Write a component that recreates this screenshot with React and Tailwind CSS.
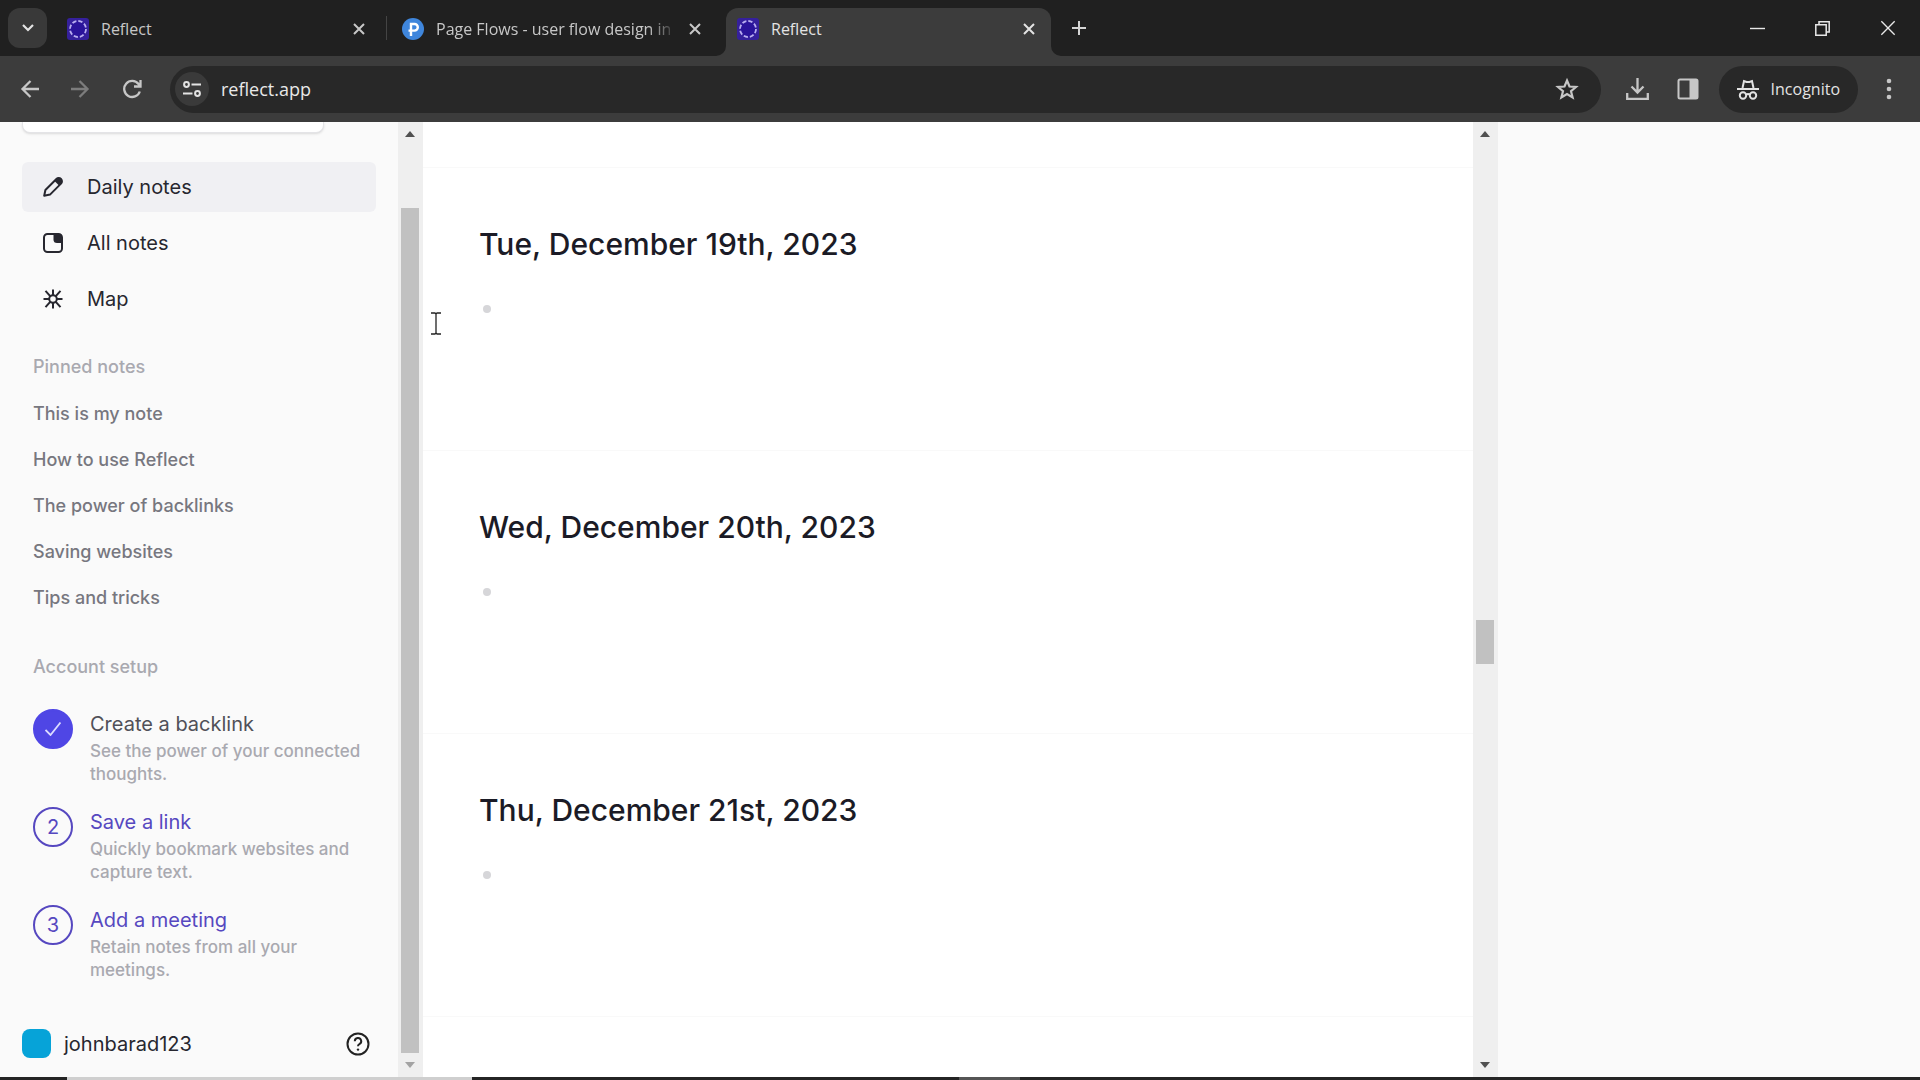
import React from 'react';

const navItems = [
    { label: 'Daily notes', icon: PencilIcon, active: true },
    { label: 'All notes', icon: NoteIcon },
    { label: 'Map', icon: MapIcon },
];

const pinnedNotes = [
    'This is my note',
    'How to use Reflect',
    'The power of backlinks',
    'Saving websites',
    'Tips and tricks',
];

const setupSteps = [
    { title: 'Create a backlink', text: 'See the power of your connected thoughts.', done: true },
    { title: 'Save a link', text: 'Quickly bookmark websites and capture text.' },
    { title: 'Add a meeting', text: 'Retain notes from all your meetings.' },
];

const days = ['Tue, December 19th, 2023', 'Wed, December 20th, 2023', 'Thu, December 21st, 2023'];

function PencilIcon() {
    return (
        <svg viewBox="0 0 20 20" className="w-5 h-5" fill="none" stroke="currentColor" strokeWidth="2" strokeLinejoin="round">
            <path d="M1.2 18.8 2.4 13 13.4 2a3 3 0 0 1 4.6 4.600L7 17.600Z" />
            <path d="M11.500 4 14 1.500c2.500-1.500 6 2 4.500 4.500L16 8.500Z" fill="currentColor" stroke="none" />
        </svg>
    );
}

function NoteIcon() {
    return (
        <svg viewBox="0 0 20 20" className="w-5 h-5" fill="none" stroke="currentColor" strokeWidth="2">
            <rect x="1" y="1" width="18" height="18" rx="3.500" />
            <path d="M10.500 1H16a3 3 0 0 1 3 3v6h-5a3.500 3.500 0 0 1-3.500-3.500Z" fill="currentColor" stroke="none" />
        </svg>
    );
}

function MapIcon() {
    return (
        <svg viewBox="0 0 20 20" className="w-5 h-5" fill="none" stroke="currentColor" strokeWidth="2">
            <circle cx="10" cy="10" r="3.800" />
            <path d="M10 6V.5M10 14v5.500M6 10H.5M14 10h5.500M7.200 7.200 2.500 1.800M12.800 7.200l4.700-5.400M7.200 12.800l-4.700 5.400M12.800 12.800l4.700 5.400" />
        </svg>
    );
}

function ReflectLogo() {
    return (
        <svg viewBox="0 0 22 22" className="w-[22px] h-[22px] shrink-0">
            <rect width="22" height="22" rx="3" fill="#35209c" />
            <circle cx="11" cy="11" r="8" fill="#2a139b" stroke="#b9aef0" strokeWidth="1.800" strokeDasharray="4.300 2" />
        </svg>
    );
}

function PageFlowsLogo() {
    return (
        <svg viewBox="0 0 22 22" className="w-[22px] h-[22px] shrink-0">
            <circle cx="11" cy="11" r="11" fill="#3f86dc" />
            <path d="M9 18V6h3.500a3.300 3.300 0 0 1 0 6.600H6.500" fill="none" stroke="#fff" strokeWidth="2.400" />
        </svg>
    );
}

function Cross({ className }) {
    return (
        <svg viewBox="0 0 12 12" className={className} fill="none" stroke="currentColor">
            <path d="m1 1 10 10M11 1 1 11" />
        </svg>
    );
}

function Tab({ title, logo, active, fade, className }) {
    return (
        <div className={`flex items-center h-full pl-[11px] pr-4 pb-[6px] gap-3 ${active ? 'bg-[#3c3c3c] rounded-t-xl text-[#e3e3e3] relative' : 'text-[#c7c7c7]'} ${className}`}>
            {active && (
                <>
                    <svg viewBox="0 0 10 10" className="absolute right-full bottom-0 w-[10px] h-[10px]"><path d="M10 0v10H0A10 10 0 0 0 10 0Z" fill="#3c3c3c" /></svg>
                    <svg viewBox="0 0 10 10" className="absolute left-full bottom-0 w-[10px] h-[10px]"><path d="M0 0v10h10A10 10 0 0 1 0 0Z" fill="#3c3c3c" /></svg>
                </>
            )}
            {logo}
            <span className={`flex-1 min-w-0 whitespace-nowrap text-[16px] leading-6 ${fade ? '[mask-image:linear-gradient(to_right,#000_88%,transparent)]' : ''}`}>{title}</span>
            <button aria-label={`Close ${title}`}><Cross className="w-3 h-3 stroke-2" /></button>
        </div>
    );
}

function TabStrip() {
    return (
        <div className="flex h-14 bg-[#202020] pt-2 pl-2">
            <button aria-label="Search tabs" className="w-[39px] h-10 rounded-xl bg-[#393939] text-[#e3e3e3] flex items-center justify-center">
                <svg viewBox="0 0 12 8" className="w-3 h-2" fill="none" stroke="currentColor" strokeWidth="2.200"><path d="m1 1 5 5 5-5" /></svg>
            </button>
            <div className="flex flex-1 min-w-0 h-12">
                <Tab title="Reflect" logo={<ReflectLogo />} className="w-[325px] ml-[9px]" />
                <div className="w-px h-6 mt-2 ml-[5px] bg-[#444]" />
                <Tab title="Page Flows - user flow design in" logo={<PageFlowsLogo />} fade className="w-[326px] ml-1" />
                <Tab title="Reflect" logo={<ReflectLogo />} active className="w-[325px] ml-[9px]" />
                <button aria-label="New tab" className="ml-5 h-10 text-[#d5d5d5]">
                    <svg viewBox="0 0 16 16" className="w-4 h-4" fill="none" stroke="currentColor" strokeWidth="2"><path d="M8 1v14M1 8h14" /></svg>
                </button>
            </div>
            <div className="flex h-10 text-[#e8e8e8]">
                <button aria-label="Minimize" className="w-[65px] flex items-center justify-center">
                    <svg viewBox="0 0 15 15" className="w-[15px] h-[15px]" fill="none" stroke="currentColor" strokeWidth="1.400"><path d="M0 7.500h15" /></svg>
                </button>
                <button aria-label="Restore" className="w-[65px] flex items-center justify-center">
                    <svg viewBox="0 0 15 15" className="w-[15px] h-[15px]" fill="none" stroke="currentColor" strokeWidth="1.500"><path d="M.8 3.800h10.400v10.400H.8ZM4 3.500V.8h10.200V11h-3" /></svg>
                </button>
                <button aria-label="Close window" className="w-[65px] flex items-center justify-center">
                    <Cross className="w-4 h-4 stroke-1" />
                </button>
            </div>
        </div>
    );
}

function Toolbar() {
    return (
        <div className="flex items-center h-[66px] pl-5 pr-7 bg-[#3c3c3c] text-[#c7c7c7]">
            <button aria-label="Back" className="w-[22px]">
                <svg viewBox="0 0 20 20" className="w-5 h-5" fill="none" stroke="currentColor" strokeWidth="2.300"><path d="M19 10H3M10.500 2 2.500 10l8 8" /></svg>
            </button>
            <button aria-label="Forward" className="w-[22px] ml-7 text-[#7c7c7c]">
                <svg viewBox="0 0 20 20" className="w-5 h-5" fill="none" stroke="currentColor" strokeWidth="2.300"><path d="M1 10h16M9.500 2l8 8-8 8" /></svg>
            </button>
            <button aria-label="Reload" className="w-5 ml-[30px]">
                <svg viewBox="0 0 20 20" className="w-5 h-5" fill="none" stroke="currentColor" strokeWidth="2.300"><path d="M17.800 12.500A8 8 0 1 1 16.500 5L18 6.800M18.500 1v6.500H12" /></svg>
            </button>
            <div className="flex items-center flex-1 h-[47px] ml-7 pl-[5px] pr-[22px] rounded-full bg-[#282828]">
                <button aria-label="Site information" className="w-[34px] h-[34px] rounded-full bg-[#3a3a3a] flex items-center justify-center text-[#e3e3e3]">
                    <svg viewBox="0 0 18 16" className="w-[18px] h-4" fill="none" stroke="currentColor" strokeWidth="2">
                        <circle cx="3.500" cy="3.500" r="2.400" /><path d="M8.500 3.500H18M0 12.500h9.500" /><circle cx="14.500" cy="12.500" r="2.400" />
                    </svg>
                </button>
                <input aria-label="Address" defaultValue="reflect.app" className="flex-1 min-w-0 ml-3 bg-transparent outline-none text-[18px] leading-6 text-[#e8e8e8]" />
                <button aria-label="Bookmark this tab">
                    <svg viewBox="0 0 24 24" className="w-6 h-6" fill="none" stroke="currentColor" strokeWidth="2.200"><path d="m12 3.500 2.500 6 6.500.5-5 4.200 1.600 6.300L12 17.100 6.400 20.500 8 14.200 3 10l6.500-.5Z" /></svg>
                </button>
            </div>
            <button aria-label="Downloads" className="ml-[25px]">
                <svg viewBox="0 0 23 22" className="w-[23px] h-[22px]" fill="none" stroke="currentColor" strokeWidth="2.300"><path d="M11.500 0v14M5.500 8.500l6 6 6-6M1.200 15v5.800h20.600V15" /></svg>
            </button>
            <button aria-label="Side panel" className="ml-7">
                <svg viewBox="0 0 22 22" className="w-[22px] h-[22px]" fill="none" stroke="currentColor" strokeWidth="2"><rect x="1.500" y="1.500" width="19" height="19" rx="1.500" /><path d="M12.500 2h7.500v18h-7.500Z" fill="currentColor" stroke="none" /></svg>
            </button>
            <button className="flex items-center h-[47px] ml-5 px-[18px] gap-3 rounded-full bg-[#282828] text-[#e3e3e3] text-[16px] leading-6">
                <svg viewBox="0 0 22 21" className="w-[22px] h-[21px]" fill="none" stroke="currentColor" strokeWidth="2">
                    <path d="M5.500 9 7 2l2.500 1h3L15 2l1.500 7" /><path d="M0 10h22" /><circle cx="6" cy="16.500" r="3.200" /><circle cx="16" cy="16.500" r="3.200" /><path d="M9 15.500q2-1 4 0" />
                </svg>
                Incognito
            </button>
            <button aria-label="Menu" className="ml-7">
                <svg viewBox="0 0 6 22" className="w-[6px] h-[22px]" fill="currentColor"><circle cx="3" cy="3" r="2.300" /><circle cx="3" cy="11" r="2.300" /><circle cx="3" cy="19" r="2.300" /></svg>
            </button>
        </div>
    );
}

function ScrollBar({ before, thumb, after, dim }) {
    return (
        <div className="flex flex-col w-[25px] shrink-0 pl-[3px] pr-1 bg-[#efefef]">
            <div className="h-6 flex items-center justify-center">
                <svg viewBox="0 0 10 6" className="w-[10px] h-[6px] fill-[#505050]"><path d="M0 6 5 0l5 6Z" /></svg>
            </div>
            <div style={{ flexGrow: before }} />
            <div className="bg-[#c1c1c1]" style={{ flexGrow: thumb }} />
            <div style={{ flexGrow: after }} />
            <div className="h-6 flex items-center justify-center">
                <svg viewBox="0 0 10 6" className={`w-[10px] h-[6px] ${dim ? 'fill-[#a3a3a3]' : 'fill-[#505050]'}`}><path d="M0 0h10L5 6Z" /></svg>
            </div>
        </div>
    );
}

function Sidebar() {
    return (
        <aside className="flex flex-col w-[398px] shrink-0 px-[22px] bg-[#fafafa]">
            <div className="w-[302px] h-[11px] shrink-0 rounded-b-lg bg-white border border-t-0 border-[#e4e4e7] shadow-sm" />
            <nav className="flex flex-col gap-[6px] mt-[29px]">
                {navItems.map(({ label, icon: Icon, active }) => (
                    <a key={label} href="#" className={`flex items-center h-[50px] pl-[21px] gap-6 rounded-md text-[20px] leading-6 text-[#27272f] ${active ? 'bg-[#f0f0f3]' : ''}`}>
                        <Icon />
                        {label}
                    </a>
                ))}
            </nav>

            <h2 className="mt-[31px] ml-[11px] text-[18px] leading-6 font-medium text-[#a9a9b0]">Pinned notes</h2>
            <ul className="mt-3">
                {pinnedNotes.map((note) => (
                    <li key={note} className="flex items-center h-[46px] ml-[11px]">
                        <a href="#" className="text-[18px] leading-6 font-medium text-[#77777f]">{note}</a>
                    </li>
                ))}
            </ul>

            <h2 className="mt-[34px] ml-[11px] text-[18px] leading-6 font-medium text-[#a9a9b0]">Account setup</h2>
            <ol className="flex flex-col gap-[21px] mt-[30px] ml-[11px]">
                {setupSteps.map((step, i) => (
                    <li key={step.title} className="flex gap-[17px]">
                        <span className={`flex items-center justify-center w-10 h-10 shrink-0 rounded-full border-2 text-[20px] ${step.done ? 'bg-[#4f46e5] border-[#4f46e5]' : 'border-[#5648c0] text-[#5648c0]'}`}>
                            {step.done ? (
                                <svg viewBox="0 0 16 14" className="w-4 h-[14px]" fill="none" stroke="#dcdcff" strokeWidth="1.800"><path d="m.5 8 5 5L15.500.5" /></svg>
                            ) : i + 1}
                        </span>
                        <div className="w-[276px]">
                            <a href="#" className={`flex items-center h-[30px] mb-px text-[20px] leading-6 ${step.done ? 'text-[#505058]' : 'text-[#5648c0]'}`}>{step.title}</a>
                            <p className="text-[17px] leading-[23px] font-medium text-[#a9a9b0]">{step.text}</p>
                        </div>
                    </li>
                ))}
            </ol>

            <div className="flex items-center mt-auto mb-[19px] pr-[6px]">
                <div className="w-[29px] h-[29px] rounded-lg bg-[#06a3d8]" />
                <span className="flex-1 ml-[13px] text-[20px] leading-6 text-[#27272f]">johnbarad123</span>
                <button aria-label="Help" className="text-[#222]">
                    <svg viewBox="0 0 24 24" className="w-6 h-6" fill="none" stroke="currentColor" strokeWidth="2"><circle cx="12" cy="12" r="10.500" /><path d="M8.800 9.200a3.200 3.200 0 1 1 4.600 2.900c-1 .5-1.400 1-1.400 2.200" /><circle cx="12" cy="17.600" r="1.200" fill="currentColor" stroke="none" /></svg>
                </button>
            </div>
        </aside>
    );
}

export default function App() {
    return (
        <div className="flex flex-col h-screen overflow-hidden bg-white font-['Open_Sans',sans-serif]">
            <header className="shrink-0">
                <TabStrip />
                <Toolbar />
            </header>

            <div className="flex flex-1 min-h-0 font-['Inter',sans-serif]">
                <Sidebar />
                <ScrollBar before={62} thumb={845} after={0} dim />
                <main className="relative flex-1 min-w-0 overflow-hidden pt-[45px] bg-white">
                    {days.map((day) => (
                        <section key={day} className="h-[283px] pl-14 pt-14 border-t border-[#f9f9f9]">
                            <h1 className="text-[30px] leading-10 font-medium text-[#1b1b26]">{day}</h1>
                            <ul className="mt-[41px] ml-1">
                                <li className="w-2 h-2 rounded-full bg-[#d6d6d9]" />
                            </ul>
                        </section>
                    ))}
                    <div className="border-t border-[#f9f9f9]" />
                    {/* text cursor */}
                    <svg viewBox="0 0 10 23" className="absolute left-2 top-[190px] w-[10px] h-[23px]" fill="none" stroke="#222" strokeWidth="1.300">
                        <path d="M0 1h4l1 1 1-1h4M5 2v19M0 22h4l1-1 1 1h4" />
                    </svg>
                </main>
                <ScrollBar before={474} thumb={44} after={389} />
                <aside className="w-[22%] shrink-0 bg-[#fafafa]" />
            </div>

            <footer className="flex h-[3px] shrink-0 bg-[#242424]">
                <div className="w-[405px] ml-[67px] bg-[#cfcfcf]" />
                <div className="w-[61px] ml-[487px] bg-[#555]" />
            </footer>
        </div>
    );
}
